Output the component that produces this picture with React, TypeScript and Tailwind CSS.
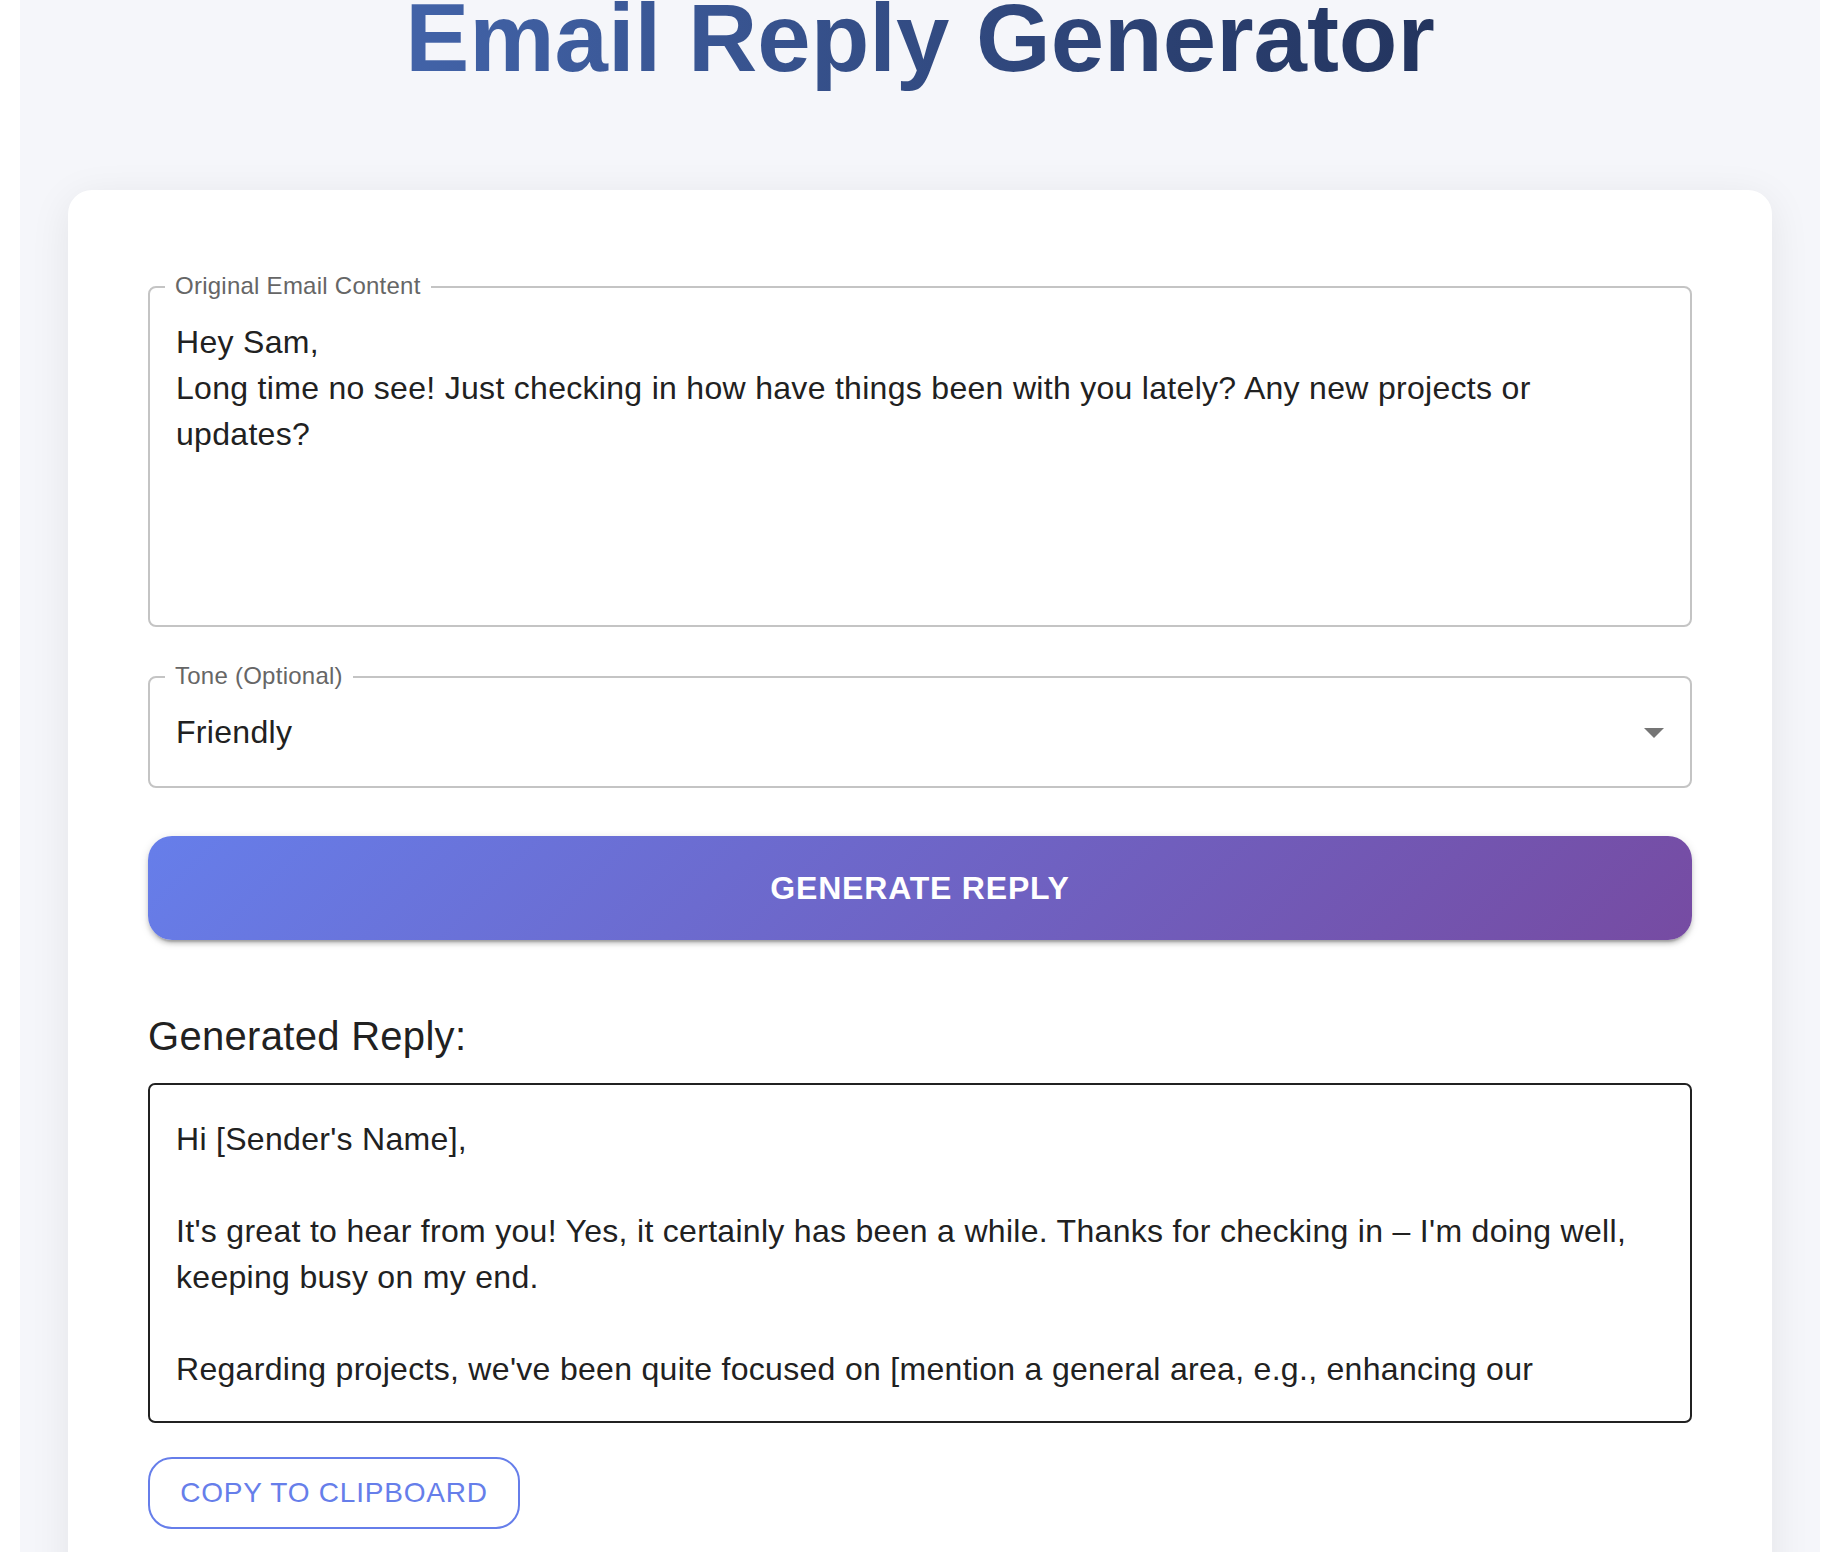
import React from "react";

const originalEmail = [
  "Hey Sam,",
  "Long time no see! Just checking in how have things been with you lately? Any new projects or",
  "updates?",
];

const replyLines = [
  "Hi [Sender's Name],",
  "",
  "It's great to hear from you! Yes, it certainly has been a while. Thanks for checking in \u2013 I'm doing well,",
  "keeping busy on my end.",
  "",
  "Regarding projects, we've been quite focused on [mention a general area, e.g., enhancing our",
];

const FieldLabel: React.FC<{ text: string }> = ({ text }) => (
  <span className="absolute left-[15px] top-[-14px] bg-white px-[10px] text-[24px] leading-[24px] tracking-[0.25px] text-[#666666]">
    {text}
  </span>
);

const App: React.FC = () => {
  return (
    <div className="h-screen overflow-hidden bg-white font-['Liberation_Sans',Arial,sans-serif]">
      <div className="mx-auto flex min-h-screen w-[1800px] flex-col bg-[#f5f6fa] px-12 pb-12">
        <h1 className="mt-[-18px] mb-[96px] text-center text-[96px] font-bold leading-[112px]">
          <span className="bg-[linear-gradient(90deg,#4263a8,#23345e)] bg-clip-text text-transparent">
            Email Reply Generator
          </span>
        </h1>

        <div className="flex flex-col rounded-[24px] bg-white px-20 pt-[96px] pb-20 shadow-[0_8px_40px_rgba(0,0,0,0.08)]">
          {/* original email */}
          <div className="relative h-[341px] rounded-[8px] border-2 border-[#c4c4c4]">
            <FieldLabel text="Original Email Content" />
            <div className="pl-[26px] pt-[31px] text-[32px] leading-[46px] tracking-[0.3px] text-[#212121] whitespace-nowrap">
              {originalEmail.map((line, i) => (
                <div key={`orig-${i}`}>{line}</div>
              ))}
            </div>
          </div>

          {/* tone select */}
          <div className="relative mt-[49px] flex h-[112px] items-center justify-between rounded-[8px] border-2 border-[#c4c4c4] pl-[26px] pr-[26px]">
            <FieldLabel text="Tone (Optional)" />
            <span className="text-[32px] leading-[46px] tracking-[0.3px] text-[#212121]">Friendly</span>
            <svg width="20" height="10" viewBox="0 0 10 5" className="mt-[2px]">
              <path d="M0 0l5 5 5-5z" fill="#757575" />
            </svg>
          </div>

          <button className="mt-[48px] flex h-[104px] items-center justify-center rounded-[24px] bg-[linear-gradient(135deg,#667eea,#764ba2)] text-[32px] font-bold uppercase tracking-[0.8px] text-white shadow-[0_6px_2px_-4px_rgba(0,0,0,0.2),0_4px_4px_0_rgba(0,0,0,0.14),0_2px_10px_0_rgba(0,0,0,0.12)]">
            Generate Reply
          </button>

          <h2 className="mt-[64px] text-[40px] font-normal leading-[64px] tracking-[0.3px] text-[#212121]">
            Generated Reply:
          </h2>

          <div className="mt-[15px] h-[340px] overflow-hidden rounded-[7px] border-2 border-[#212121] pl-[26px] pt-[31px] text-[32px] leading-[46px] tracking-[0.3px] text-[#212121] whitespace-nowrap">
            {replyLines.map((line, i) => (
              <div key={`reply-${i}`} className="h-[46px]">
                {line}
              </div>
            ))}
          </div>

          <button className="mt-[34px] flex h-[72px] w-[372px] items-center justify-center rounded-[24px] border-2 border-[#667eea] text-[28px] uppercase tracking-[0.8px] text-[#667eea]">
            Copy to Clipboard
          </button>
        </div>
      </div>
    </div>
  );
};

export default App;
